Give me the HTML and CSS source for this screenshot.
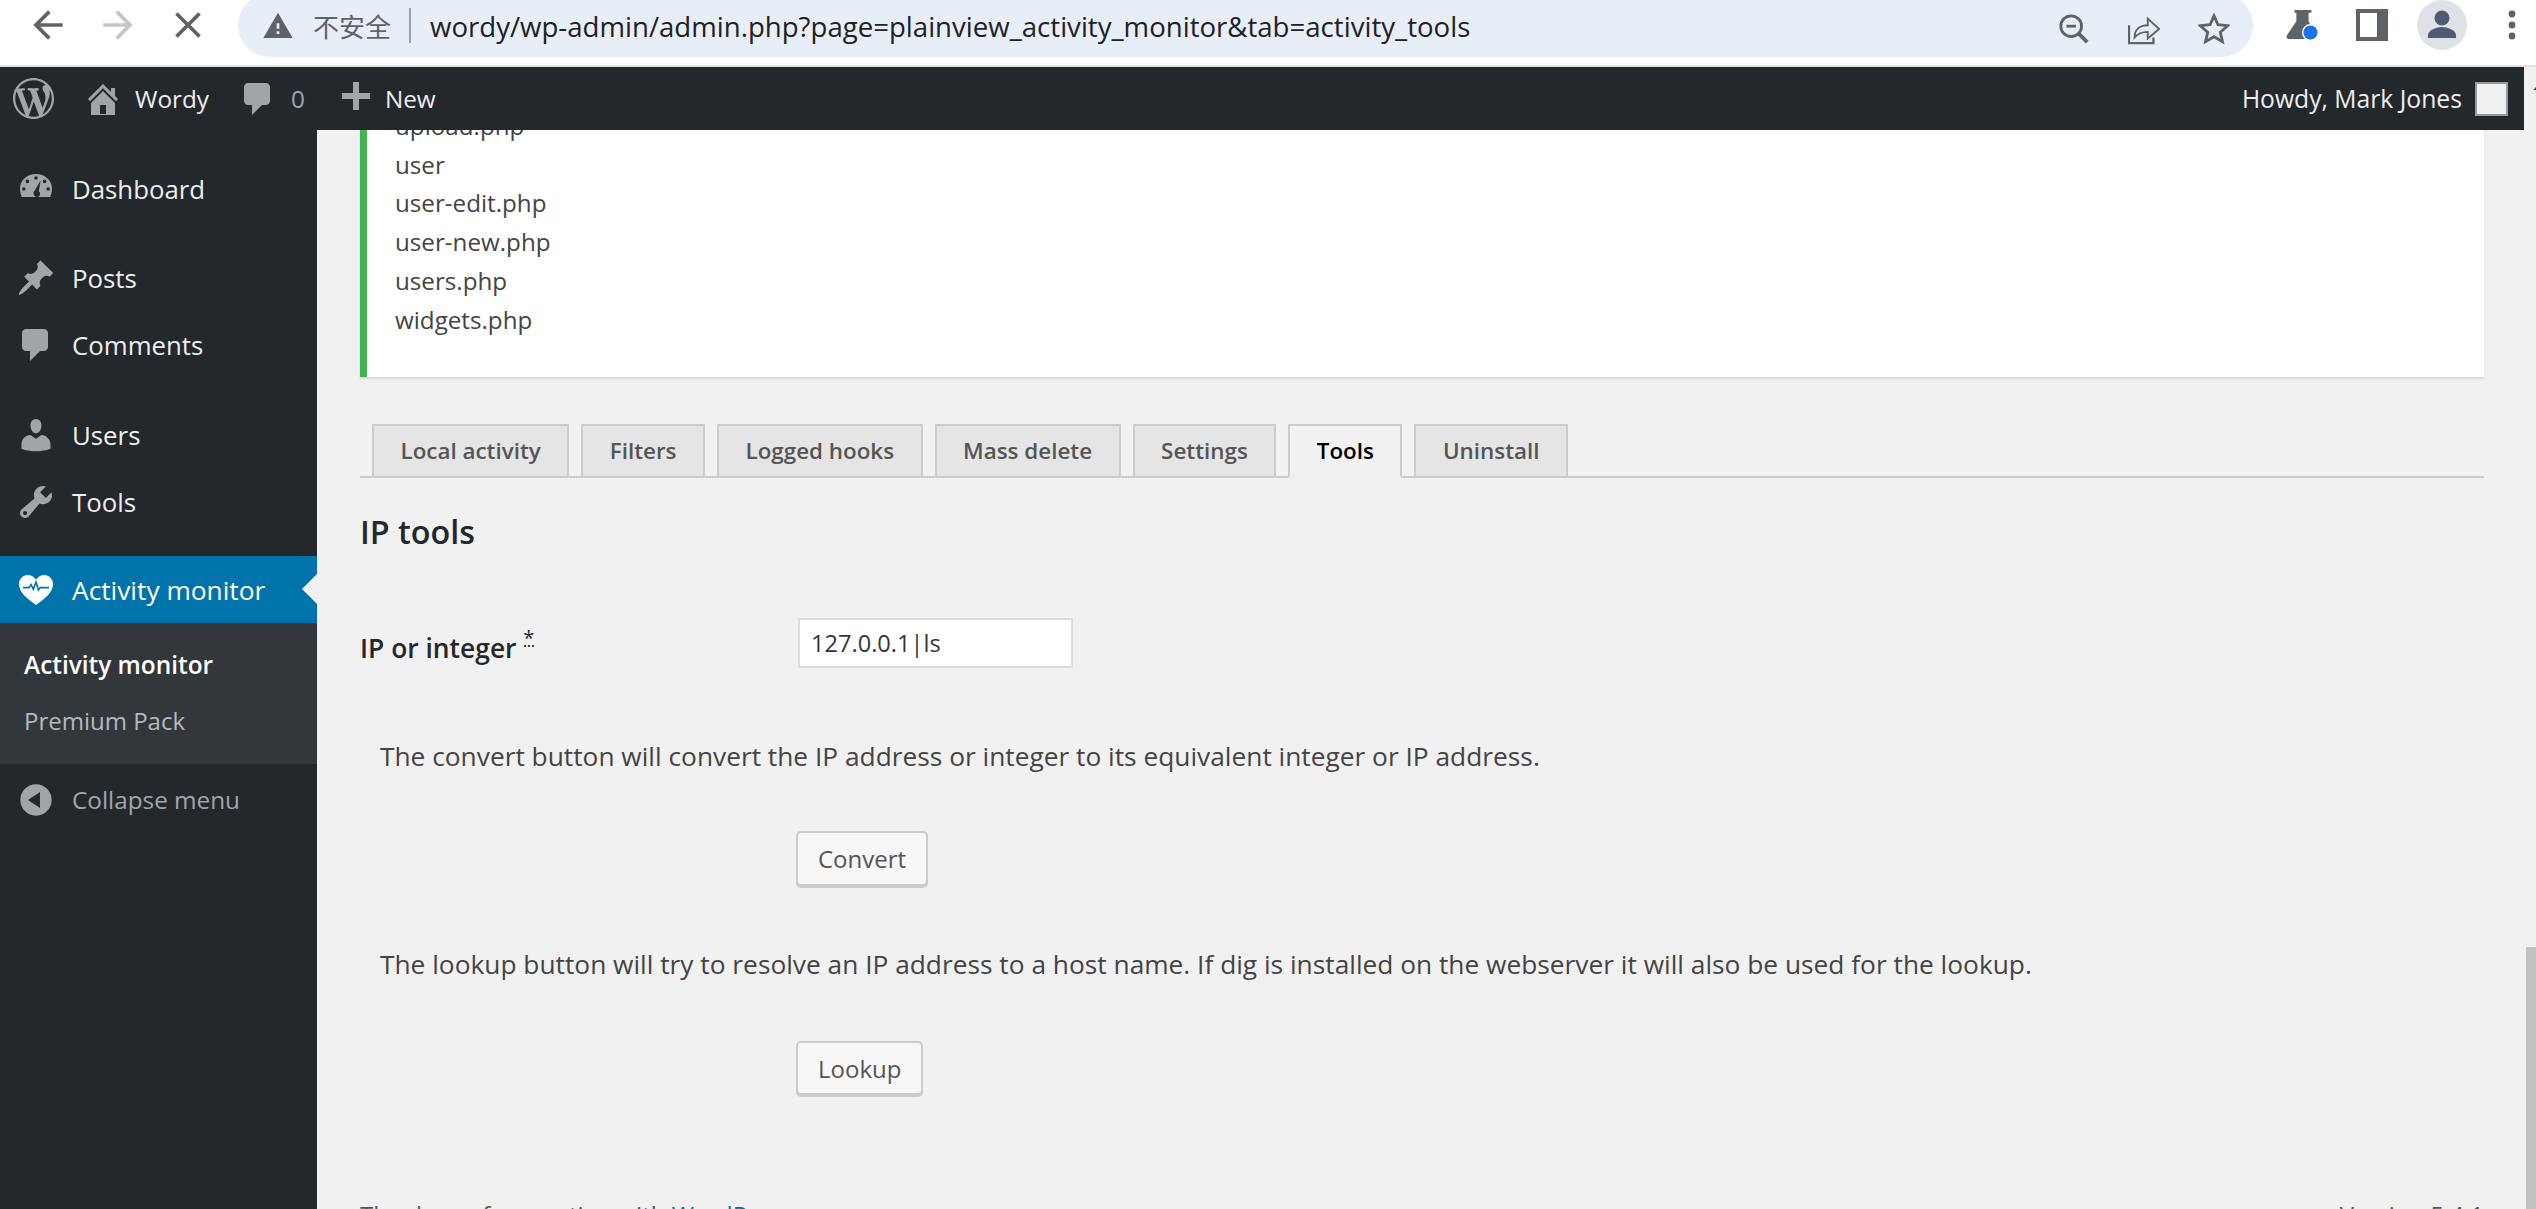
FILE: index.html
```html
<!DOCTYPE html>
<html lang="en">

<head>
    <meta charset="UTF-8">
    <meta name="viewport" content="width=device-width, initial-scale=1.0">
    <title>Activity monitor - Wordy</title>
    <link rel="stylesheet" href="styles.css">
</head>

<body>
    <!-- Browser toolbar -->
    <div class="browser-bar">
        <div class="nav-buttons">
            <span class="nav-btn"><svg class="nav-icon" viewBox="0 0 24 24"><path d="M20 11H7.830l5.590-5.590L12 4l-8 8 8 8 1.410-1.410L7.830 13H20v-2z" /></svg></span>
            <span class="nav-btn"><svg class="nav-icon nav-icon-off" viewBox="0 0 24 24"><path d="M4 11h12.170l-5.590-5.590L12 4l8 8-8 8-1.410-1.410L16.170 13H4v-2z" /></svg></span>
            <span class="nav-btn"><svg class="nav-icon" viewBox="0 0 24 24"><path d="M19 6.410L17.590 5 12 10.590 6.410 5 5 6.410 10.590 12 5 17.590 6.410 19 12 13.410 17.590 19 19 17.590 13.410 12z" /></svg></span>
        </div>
        <div class="address-pill">
            <svg class="warn-icon" viewBox="0 0 24 24"><path d="M1 21h22L12 2 1 21zm12-3h-2v-2h2v2zm0-4h-2v-4h2v4z" /></svg>
            <span class="not-secure">不安全</span>
            <span class="address-divider"></span>
            <span class="address-url">wordy/wp-admin/admin.php?page=plainview_activity_monitor&amp;tab=activity_tools</span>
            <div class="pill-actions">
                <span class="nav-btn"><svg class="tool-icon" viewBox="0 0 34 34" fill="none" stroke="#5f6368" stroke-width="3"><circle cx="14" cy="14" r="11" /><path d="M9 14h10" /><path d="M22 22l9 9" stroke-width="4" /></svg></span>
                <span class="nav-btn"><svg class="tool-icon" viewBox="0 0 34 34" fill="none" stroke="#5f6368" stroke-width="2.500"><path d="M1 13v19h26v-6" /><path d="M7 26c0-8 5-13 14-13V6l12 11-12 10v-7c-6 0-10 1-14 6z" stroke-width="2" /></svg></span>
                <span class="nav-btn"><svg class="tool-icon" viewBox="0 0 34 34" fill="none" stroke="#5f6368" stroke-width="3"><path d="M17 3l4.200 9.500 10.300 1-7.800 6.900 2.300 10.100-9-5.300-9 5.300 2.300-10.100-7.800-6.900 10.300-1z" /></svg></span>
            </div>
        </div>
        <div class="browser-actions">
            <span class="nav-btn"><svg class="tool-icon" viewBox="0 0 34 34"><path fill="#5f6368" d="M9 1h18v3h-3v9l8 15c1 2 0 4-2 4H3c-2 0-3-2-2-4l10-15V4H9z" /><circle cx="26" cy="25" r="9" fill="#fff" /><circle cx="26" cy="25" r="7.500" fill="#1a73e8" /></svg></span>
            <span class="nav-btn"><svg class="tool-icon" viewBox="0 0 32 32"><path fill="#5f6368" fill-rule="evenodd" d="M0 0h32v32H0zM4 4v24h17V4z" /></svg></span>
            <span class="nav-btn"><svg class="avatar-icon" viewBox="0 0 50 50"><circle cx="25" cy="25" r="25" fill="#dee1e6" /><circle cx="25" cy="18" r="7.500" fill="#4f5b72" /><path fill="#4f5b72" d="M11 38v-3c0-5 9-8 14-8s14 3 14 8v3z" /></svg></span>
            <span class="nav-btn"><svg class="dots-icon" viewBox="0 0 8 32"><circle cx="4" cy="5" r="3.400" /><circle cx="4" cy="16" r="3.400" /><circle cx="4" cy="27" r="3.400" /></svg></span>
        </div>
    </div>

    <div class="viewport">
        <div class="page">
            <!-- WordPress admin bar -->
            <div class="admin-bar">
                <svg class="wp-logo" viewBox="0 0 20 20"><path d="M20 10c0-5.510-4.490-10-10-10C4.480 0 0 4.490 0 10c0 5.520 4.480 10 10 10 5.510 0 10-4.480 10-10zM7.780 15.370L4.370 6.220c.550-.020 1.170-.080 1.170-.080.500-.060.440-1.130-.060-1.110 0 0-1.450.110-2.370.110-.180 0-.370 0-.580-.010C4.120 2.690 6.870 1.110 10 1.110c2.330 0 4.450.870 6.050 2.340-.680-.110-1.650.390-1.650 1.580 0 .740.450 1.360.900 2.100.350.610.550 1.360.550 2.460 0 1.490-1.400 5-1.400 5l-3.030-8.350c.540-.020.820-.170.820-.170.500-.050.440-1.250-.060-1.220 0 0-1.440.120-2.380.120-.870 0-2.330-.120-2.330-.120-.500-.030-.560 1.200-.060 1.220l.920.080 1.260 3.410zM17.410 10c.240-.640.740-1.870.430-4.250.700 1.290 1.050 2.710 1.050 4.250 0 3.290-1.730 6.240-4.400 7.780.970-2.590 1.940-5.200 2.920-7.780zM6.100 18.090C3.120 16.650 1.110 13.530 1.110 10c0-1.300.230-2.480.720-3.590C3.250 10.300 4.670 14.200 6.100 18.090zm4.030-6.630l2.580 6.980c-.860.290-1.760.450-2.710.450-.790 0-1.570-.110-2.290-.330.810-2.380 1.620-4.740 2.420-7.100z" /></svg>
                <svg class="bar-icon bar-home" viewBox="0 0 20 20"><path fill-rule="evenodd" d="M16 8.500l1.530 1.530-1.060 1.060L10 4.620l-6.470 6.470-1.060-1.060L10 2.500l4 4v-2h2v4zm-6-2.460l6 5.990V18H4v-5.970zM11.500 17.500v-4.500h-3v4.500z" /></svg>
                <span class="bar-site">Wordy</span>
                <svg class="bar-icon bar-comment" viewBox="0 0 20 20"><path d="M5 2h9c1.100 0 2 .9 2 2v7c0 1.100-.9 2-2 2h-2l-5 5v-5H5c-1.100 0-2-.9-2-2V4c0-1.100.9-2 2-2z" /></svg>
                <span class="bar-count">0</span>
                <svg class="bar-icon bar-plus" viewBox="0 0 20 20"><path d="M17 7v3h-5.500v5.500h-3V10H3V7h5.500V1.500h3V7z" /></svg>
                <span class="bar-new">New</span>
                <span class="bar-howdy">Howdy, Mark Jones</span>
                <span class="bar-avatar"></span>
            </div>

            <div class="workspace">
                <!-- Side menu -->
                <div class="sidebar">
                    <a class="menu-item menu-first"><svg class="menu-icon" viewBox="0 0 20 20"><path fill-rule="evenodd" d="M10 2.500c-4.420 0-8 3.100-8 7.300 0 1.800.4 3.200 1 4.200h14c.6-1 1-2.400 1-4.200 0-4.200-3.580-7.300-8-7.300zM10 3.600a.9.9 0 1 1 0 1.800.9.9 0 0 1 0-1.800zM5.700 5.300a.9.9 0 1 1 0 1.800.9.9 0 0 1 0-1.800zM14.300 5.300a.9.9 0 1 1 0 1.800.9.9 0 0 1 0-1.800zM3.900 9.100a.9.9 0 1 1 0 1.800.9.9 0 0 1 0-1.800zM16.100 9.100a.9.9 0 1 1 0 1.800.9.9 0 0 1 0-1.800zM12.300 5.800l-.9 5.300a1.600 1.600 0 1 1-2.500 1.700c-.3-.7-.1-1.500.5-2z" /></svg>Dashboard</a>
                    <a class="menu-item menu-gap menu-gap-first"><svg class="menu-icon" viewBox="0 0 20 20"><path d="M10.440 3.020l1.820-1.820 6.360 6.350-1.830 1.820c-1.050-.680-2.480-.570-3.410.360l-.750.750c-.920.930-1.040 2.350-.350 3.400l-1.830 1.820-2.410-2.410-2.800 2.790c-.420.420-3.380 2.710-3.800 2.290s1.860-3.390 2.280-3.810l2.790-2.790L4.100 9.360l1.830-1.820c1.050.690 2.480.570 3.400-.360l.750-.750c.930-.920 1.050-2.350.360-3.410z" /></svg>Posts</a>
                    <a class="menu-item"><svg class="menu-icon" viewBox="0 0 20 20"><path d="M5 2h9c1.100 0 2 .9 2 2v7c0 1.100-.9 2-2 2h-2l-5 5v-5H5c-1.100 0-2-.9-2-2V4c0-1.100.9-2 2-2z" /></svg>Comments</a>
                    <a class="menu-item menu-gap"><svg class="menu-icon" viewBox="0 0 20 20"><path d="M10 9.250c-2.270 0-2.730-3.440-2.730-3.440C7 4.020 7.820 2 9.970 2c2.160 0 2.980 2.020 2.710 3.810 0 0-.410 3.440-2.680 3.440zm0 2.570L12.720 10c2.390 0 4.520 2.330 4.520 4.530v2.490s-3.650 1.130-7.240 1.130c-3.650 0-7.240-1.130-7.240-1.130v-2.490c0-2.250 1.940-4.480 4.470-4.480z" /></svg>Users</a>
                    <a class="menu-item"><svg class="menu-icon" viewBox="0 0 20 20"><path d="M16.680 9.770c-1.340 1.340-3.300 1.670-4.950.990l-5.410 6.520c-.990.990-2.590.990-3.580 0s-.990-2.590 0-3.570l6.520-5.420c-.680-1.650-.350-3.610.990-4.950 1.280-1.280 3.120-1.620 4.720-1.060l-2.890 2.890 2.820 2.820 2.860-2.870c.530 1.580.180 3.390-1.080 4.650zM3.810 16.210c.400.390 1.030.390 1.420 0 .400-.400.400-1.030 0-1.430-.390-.390-1.020-.390-1.420 0-.390.400-.390 1.030 0 1.430z" /></svg>Tools</a>
                    <a class="menu-item menu-active"><svg class="menu-icon" viewBox="0 0 20 20"><path fill="#fff" d="M10 17.500C6 14.500 1.500 11.500 1.500 7c0-2.500 2-4.500 4.300-4.500 1.800 0 3.200 1 4.200 2.300 1-1.300 2.400-2.300 4.200-2.300 2.300 0 4.300 2 4.300 4.500 0 4.500-4.500 7.500-8.500 10.500z" /><path fill="none" stroke="#0073aa" stroke-width=".8" d="M3.500 8.800h3l1-1.500 1.200 2.300 1.300-3.600 1.200 4 .9-1.200h4.400" /></svg>Activity monitor</a>
                    <div class="submenu">
                        <a class="submenu-item submenu-current">Activity monitor</a>
                        <a class="submenu-item">Premium Pack</a>
                    </div>
                    <a class="menu-item menu-collapse"><svg class="menu-icon" viewBox="0 0 20 20"><path fill-rule="evenodd" d="M10 2.160c4.330 0 7.840 3.510 7.840 7.840S14.330 17.840 10 17.840 2.160 14.330 2.160 10 5.670 2.160 10 2.160zM12 14V6l-6 4z" /></svg>Collapse menu</a>
                </div>

                <!-- Main content, scrolled down the page -->
                <div class="content">
                    <div class="notice">
                        <div>upload.php</div>
                        <div>user</div>
                        <div>user-edit.php</div>
                        <div>user-new.php</div>
                        <div>users.php</div>
                        <div>widgets.php</div>
                    </div>

                    <div class="tabs">
                        <a class="tab">Local activity</a>
                        <a class="tab">Filters</a>
                        <a class="tab">Logged hooks</a>
                        <a class="tab">Mass delete</a>
                        <a class="tab">Settings</a>
                        <a class="tab tab-active">Tools</a>
                        <a class="tab">Uninstall</a>
                    </div>

                    <h2>IP tools</h2>

                    <div class="field-row">
                        <label for="ip">IP or integer <span class="required">*<i></i></span></label>
                        <input type="text" id="ip" value="127.0.0.1|ls">
                    </div>

                    <p class="hint hint-first">The convert button will convert the IP address or integer to its equivalent integer or IP address.</p>
                    <button class="wp-button convert-button">Convert</button>

                    <p class="hint hint-second">The lookup button will try to resolve an IP address to a host name. If dig is installed on the webserver it will also be used for the lookup.</p>
                    <button class="wp-button lookup-button">Lookup</button>

                    <div class="footer">
                        <span>Thank you for creating with <a>WordPress</a>.</span>
                        <span>Version 5.4.1</span>
                    </div>
                </div>
            </div>
        </div>

        <div class="scrollbar">
            <span class="scroll-arrow"></span>
            <span class="scroll-thumb"></span>
        </div>
    </div>
</body>

</html>
```

FILE: styles.css
```css
/* General Styles */
html,
body {
    height: 100%;
}

body {
    margin: 0;
    overflow: hidden;
    background-color: #f1f1f1;
    color: #444;
    font-family: 'Open Sans', 'Noto Sans', sans-serif;
    display: flex;
    flex-direction: column;
}

svg {
    display: block;
    flex-shrink: 0;
}

/* Browser toolbar */
.browser-bar {
    height: 65px;
    flex-shrink: 0;
    background-color: #fff;
    border-bottom: 2px solid #e0e0e0;
    display: flex;
    align-items: flex-start;
    overflow: hidden;
}

.nav-buttons {
    display: flex;
    flex-shrink: 0;
    margin-left: 13px;
}

.nav-btn {
    width: 70px;
    height: 50px;
    display: flex;
    align-items: center;
    justify-content: center;
}

.nav-icon {
    width: 44px;
    height: 44px;
    fill: #5f6368;
}

.nav-icon-off {
    fill: #c4c6c9;
}

.address-pill {
    width: 2015px;
    height: 63px;
    flex-shrink: 0;
    margin-top: -6px;
    margin-left: 15px;
    border-radius: 32px;
    background-color: #e8eef7;
    display: flex;
    align-items: center;
    padding-left: 24px;
    box-sizing: border-box;
}

.warn-icon {
    width: 32px;
    height: 32px;
    fill: #5f6368;
}

.not-secure {
    margin-left: 19px;
    font-family: 'Noto Sans CJK SC', sans-serif;
    font-size: 26px;
    color: #5f6368;
}

.address-divider {
    width: 2px;
    height: 35px;
    margin-left: 18px;
    background-color: #9aa0a6;
}

.address-url {
    margin-left: 19px;
    font-size: 27.600px;
    color: #202124;
    white-space: nowrap;
}

.pill-actions {
    display: flex;
    margin-left: auto;
    margin-top: 6px;
    padding-right: 4px;
}

.tool-icon {
    width: 32px;
    height: 32px;
}

.browser-actions {
    display: flex;
    flex-shrink: 0;
    margin-left: 14px;
}

.avatar-icon {
    width: 50px;
    height: 50px;
}

.dots-icon {
    width: 8px;
    height: 32px;
    fill: #5f6368;
}

/* Page and scrollbar */
.viewport {
    flex: 1;
    min-height: 0;
    display: flex;
}

.page {
    flex: 1;
    min-width: 0;
    display: flex;
    flex-direction: column;
}

.scrollbar {
    width: 12px;
    background-color: #f1f1f1;
    overflow: hidden;
}

.scroll-arrow {
    display: block;
    width: 0;
    height: 0;
    margin: 19px 0 0 9px;
    border-left: 4px solid transparent;
    border-right: 4px solid transparent;
    border-bottom: 4px solid #505050;
}

.scroll-thumb {
    display: block;
    height: 262px;
    margin: 857px 0 0 2px;
    background-color: #c1c1c1;
}

/* Admin bar */
.admin-bar {
    height: 63px;
    flex-shrink: 0;
    background-color: #23282d;
    color: #eee;
    font-size: 24.300px;
    display: flex;
    align-items: center;
    padding-left: 13px;
}

.wp-logo {
    width: 41px;
    height: 41px;
    fill: #a0a5aa;
}

.bar-icon {
    width: 40px;
    height: 40px;
    fill: #a0a5aa;
}

.bar-home {
    margin-left: 29px;
}

.bar-site {
    margin-left: 12px;
}

.bar-comment {
    margin-left: 29px;
}

.bar-count {
    margin-left: 13px;
    color: #a0a5aa;
}

.bar-plus {
    margin-left: 31px;
}

.bar-new {
    margin-left: 9px;
}

.bar-howdy {
    margin-left: auto;
    font-size: 24.700px;
}

.bar-avatar {
    width: 29px;
    height: 30px;
    margin: 0 16px 0 13px;
    background-color: #f1f1f1;
    border: 2px solid #999;
}

/* Side menu */
.workspace {
    flex: 1;
    min-height: 0;
    display: flex;
}

.sidebar {
    width: 317px;
    flex-shrink: 0;
    background-color: #23282d;
    padding-top: 25px;
    box-sizing: border-box;
}

.menu-item {
    height: 67px;
    display: flex;
    align-items: center;
    color: #eee;
    font-size: 25.800px;
    padding-left: 16px;
    gap: 16px;
    position: relative;
}

.menu-gap {
    margin-top: 23px;
}

.menu-gap-first {
    margin-top: 22px;
}

.menu-icon {
    width: 40px;
    height: 40px;
    fill: #a0a5aa;
}

.menu-active {
    margin-top: 21px;
    background-color: #0073aa;
    color: #fff;
    font-size: 26.300px;
}

/* Little arrow pointing at the content */
.menu-active::after {
    content: '';
    position: absolute;
    right: 0;
    top: 18px;
    border-top: 15px solid transparent;
    border-bottom: 15px solid transparent;
    border-right: 15px solid #f1f1f1;
}

.submenu {
    background-color: #32373c;
    padding: 14px 0 15px;
}

.submenu-item {
    display: block;
    height: 56px;
    line-height: 56px;
    padding-left: 24px;
    font-size: 24px;
    color: #b4b9be;
}

.submenu-current {
    color: #fff;
    font-weight: 600;
    font-size: 24.400px;
}

.menu-collapse {
    margin-top: 2px;
    color: #a0a5aa;
    font-size: 24.300px;
}

/* Main content */
.content {
    flex: 1;
    min-width: 0;
    overflow: hidden;
    padding: 0 40px 0 43px;
    font-size: 26.300px;
}

.notice {
    margin-top: -23px;
    padding: 0 0 38px 28px;
    background-color: #fff;
    border-left: 7px solid #46b450;
    box-shadow: 0 2px 2px rgba(0, 0, 0, 0.1);
    font-size: 24.200px;
    line-height: 38.700px;
}

.tabs {
    margin-top: 47px;
    padding-left: 12px;
    display: flex;
    gap: 12px;
    border-bottom: 2px solid #ccc;
}

.tab {
    height: 50px;
    line-height: 50px;
    padding: 0 26.500px;
    margin-bottom: -2px;
    background-color: #e5e5e5;
    border: 2px solid #ccc;
    font-size: 22.400px;
    font-weight: 600;
    color: #555;
}

.tab-active {
    background-color: #f1f1f1;
    border-bottom-color: #f1f1f1;
    color: #000;
}

h2 {
    margin: 33px 0 0;
    font-size: 32.300px;
    line-height: 40px;
    font-weight: 600;
    color: #23282d;
}

.field-row {
    margin-top: 67px;
    display: flex;
    align-items: flex-start;
}

label {
    width: 438px;
    padding-top: 5px;
    line-height: 50px;
    font-size: 26.400px;
    font-weight: 600;
    color: #23282d;
    box-sizing: border-box;
}

.required {
    display: inline-block;
    font-size: 20px;
    font-weight: 400;
    line-height: 15px;
    vertical-align: 13px;
    text-align: center;
}

/* Dotted underline under the star */
.required i {
    display: block;
    width: 10px;
    height: 0;
    margin: 0 auto;
    border-top: 2px dotted #444;
}

input[type="text"] {
    width: 275px;
    height: 50px;
    padding: 0 11px;
    border: 2px solid #ddd;
    background-color: #fff;
    box-sizing: border-box;
    font-family: inherit;
    font-size: 23.600px;
    color: #32373c;
}

.hint {
    margin: 0;
    padding-left: 20px;
    line-height: 40px;
}

.hint-first {
    margin-top: 63px;
}

.hint-second {
    margin-top: 58px;
}

.wp-button {
    display: block;
    margin-left: 436px;
    padding: 0 20px;
    background-color: #f7f7f7;
    border: 2px solid #ccc;
    border-radius: 5px;
    box-shadow: 0 2px 0 #ccc;
    font-family: inherit;
    font-size: 24px;
    color: #555;
}

.convert-button {
    margin-top: 55px;
    height: 55px;
}

.lookup-button {
    margin-top: 57px;
    height: 54px;
}

.footer {
    margin-top: 100px;
    display: flex;
    justify-content: space-between;
    font-size: 24px;
    line-height: 40px;
    color: #555;
}

.footer a {
    color: #0073aa;
}
```
